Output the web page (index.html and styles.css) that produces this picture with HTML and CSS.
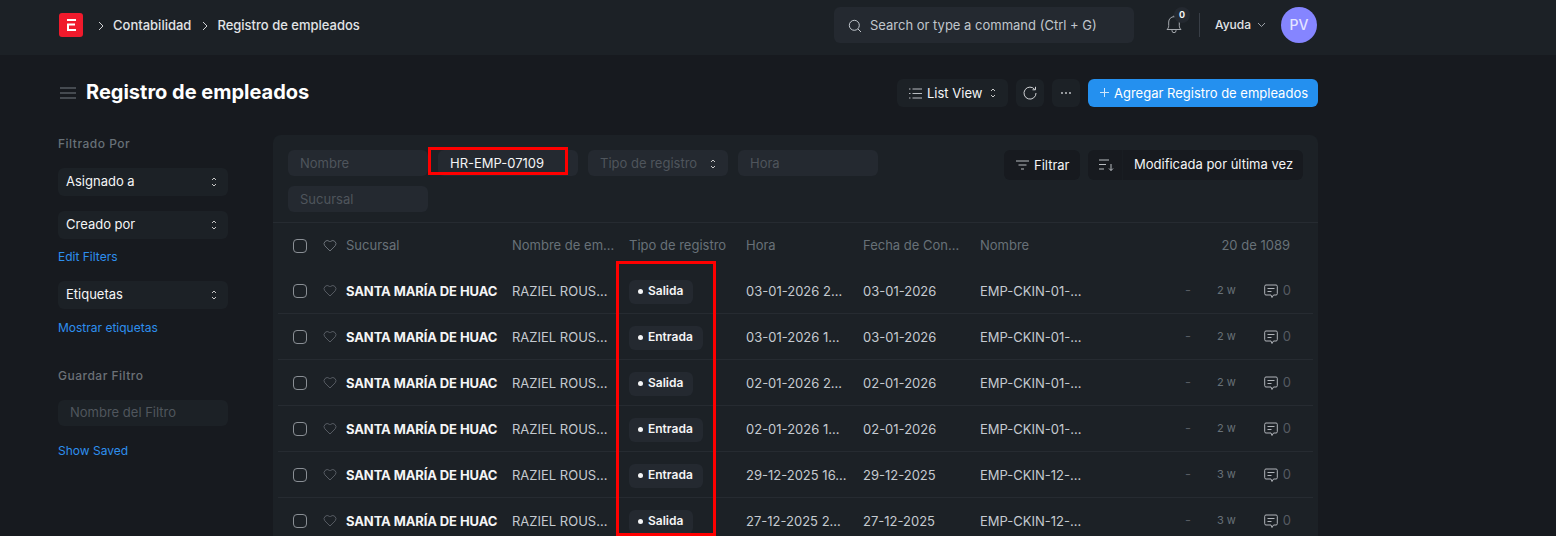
FILE: index.html
```html
<!DOCTYPE html>
<html lang="es">
<head>
<meta charset="UTF-8" />
<title>Registro de empleados</title>
<link rel="stylesheet" href="styles.css">
</head>
<body>
  <header class="navbar">
    <div class="navbar-inner">
      <svg class="logo" width="24" height="24" viewBox="0 0 24 24">
        <rect width="24" height="24" rx="3" fill="#f01a2c"/>
        <path d="M8 6h9v2H8zM8 10.500h8v2h-6v3.500h7v2H8z" fill="#fff"/>
      </svg>
      <nav class="crumbs">
        <svg class="crumb-sep" width="8" height="10" viewBox="0 0 8 10"><path d="M2 1l4 4-4 4" /></svg>
        <a>Contabilidad</a>
        <svg class="crumb-sep" width="8" height="10" viewBox="0 0 8 10"><path d="M2 1l4 4-4 4" /></svg>
        <a>Registro de empleados</a>
      </nav>
      <div class="search">
        <svg width="14" height="14" viewBox="0 0 14 14"><circle cx="6.300" cy="6.300" r="5" /><path d="M10 10l3 3" /></svg>
        <span>Search or type a command (Ctrl + G)</span>
      </div>
      <div class="bell">
        <svg width="18" height="20" viewBox="0 0 18 20"><path d="M2 15.500c1-1 1.700-2 1.700-4V8a5.300 5.300 0 0 1 10.600 0v3.500c0 2 .7 3 1.700 4zM7 15.500v1.200a2 2 0 0 0 4 0v-1.200M9 2.700V1.500" /></svg>
        <span class="bell-count">0</span>
      </div>
      <div class="nav-divider"></div>
      <div class="help">Ayuda
        <svg width="9" height="6" viewBox="0 0 9 6"><path d="M1 1l3.500 3.500L8 1" /></svg>
      </div>
      <div class="avatar">PV</div>
    </div>
  </header>

  <main class="container">
    <div class="page-head">
      <svg class="menu-icon" width="16" height="12" viewBox="0 0 16 12"><path d="M0 1h16M0 6h16M0 11h16" /></svg>
      <h1>Registro de empleados</h1>
      <div class="actions">
        <button class="btn view-btn">
          <svg width="13" height="11" viewBox="0 0 13 11"><path d="M0 1h1.500M0 5.500h1.500M0 10h1.500M3.500 1H13M3.500 5.500H13M3.500 10H13" /></svg>
          List View
          <svg class="updown" width="6" height="10" viewBox="0 0 6 10"><path d="M1 3l2-2 2 2M1 7l2 2 2-2" /></svg>
        </button>
        <button class="btn icon-btn">
          <svg width="14" height="14" viewBox="0 0 14 14"><path d="M11.800 3.500A6 6 0 1 0 13 7M12.500 .8v3h-3" /></svg>
        </button>
        <button class="btn icon-btn">
          <svg class="dots" width="10" height="2" viewBox="0 0 10 2"><circle cx="1" cy="1" r=".9"/><circle cx="5" cy="1" r=".9"/><circle cx="9" cy="1" r=".9"/></svg>
        </button>
        <button class="btn primary">
          <svg class="plus" width="9" height="9" viewBox="0 0 9 9"><path d="M4.500 0v9M0 4.500h9" /></svg>
          Agregar Registro de empleados
        </button>
      </div>
    </div>

    <div class="layout">
      <aside class="sidebar">
        <h4>Filtrado Por</h4>
        <div class="side-select">Asignado a
          <svg class="updown" width="6" height="10" viewBox="0 0 6 10"><path d="M1 3l2-2 2 2M1 7l2 2 2-2" /></svg>
        </div>
        <div class="side-select">Creado por
          <svg class="updown" width="6" height="10" viewBox="0 0 6 10"><path d="M1 3l2-2 2 2M1 7l2 2 2-2" /></svg>
        </div>
        <a class="side-link">Edit Filters</a>
        <div class="side-select tags">Etiquetas
          <svg class="updown" width="6" height="10" viewBox="0 0 6 10"><path d="M1 3l2-2 2 2M1 7l2 2 2-2" /></svg>
        </div>
        <a class="side-link">Mostrar etiquetas</a>
        <h4 class="save-title">Guardar Filtro</h4>
        <div class="side-input">Nombre del Filtro</div>
        <a class="side-link">Show Saved</a>
      </aside>

      <section class="list-card">
        <div class="filters">
          <div class="filter-fields">
            <div class="field">Nombre</div>
            <div class="field filled">HR-EMP-07109</div>
            <div class="field select">Tipo de registro
              <svg class="updown" width="6" height="10" viewBox="0 0 6 10"><path d="M1 3l2-2 2 2M1 7l2 2 2-2" /></svg>
            </div>
            <div class="field">Hora</div>
            <div class="field">Sucursal</div>
          </div>
          <div class="filter-btns">
            <button class="btn filter-btn">
              <svg width="13" height="10" viewBox="0 0 13 10"><path d="M0 1h13M2.500 5h8M5 9h3" /></svg>
              Filtrar
            </button>
            <div class="sort-group">
              <span class="sort-icon">
                <svg width="15" height="12" viewBox="0 0 15 12"><path d="M0 1h10M0 5.500h7M0 10h5M12 5v6.500M10 9.500l2 2 2-2" /></svg>
              </span>
              <span class="sort-label">Modificada por última vez</span>
            </div>
          </div>
        </div>

        <div class="row head">
          <span class="check"></span>
          <svg class="heart" width="14" height="13" viewBox="0 0 14 13"><path d="M7 12L1.800 6.800a3.200 3.200 0 0 1 4.500-4.500l.7.7.7-.7a3.200 3.200 0 0 1 4.500 4.500z" /></svg>
          <span>Sucursal</span>
          <span>Nombre de em…</span>
          <span>Tipo de registro</span>
          <span>Hora</span>
          <span>Fecha de Con…</span>
          <span>Nombre</span>
          <span class="count">20 de 1089</span>
        </div>

        <div class="row">
          <span class="check"></span>
          <svg class="heart" width="14" height="13" viewBox="0 0 14 13"><path d="M7 12L1.800 6.800a3.200 3.200 0 0 1 4.500-4.500l.7.7.7-.7a3.200 3.200 0 0 1 4.500 4.500z" /></svg>
          <span class="subject">SANTA MARÍA DE HUAC</span>
          <span>RAZIEL ROUS…</span>
          <span><span class="pill">Salida</span></span>
          <span>03-01-2026 2…</span>
          <span>03-01-2026</span>
          <span>EMP-CKIN-01-…</span>
          <span class="meta"><span class="dash">-</span><span class="age">2 w</span><svg class="chat" width="14" height="15" viewBox="0 0 14 15"><path d="M2 1h10a1.300 1.300 0 0 1 1.300 1.300v7.400A1.300 1.300 0 0 1 12 11H9.500L8 13.500 7 11H2A1.300 1.300 0 0 1 .7 9.700V2.300A1.300 1.300 0 0 1 2 1zM3.500 4.500h7M3.500 7.500h4" /></svg><span class="zero">0</span></span>
        </div>
        <div class="row">
          <span class="check"></span>
          <svg class="heart" width="14" height="13" viewBox="0 0 14 13"><path d="M7 12L1.800 6.800a3.200 3.200 0 0 1 4.500-4.500l.7.7.7-.7a3.200 3.200 0 0 1 4.500 4.500z" /></svg>
          <span class="subject">SANTA MARÍA DE HUAC</span>
          <span>RAZIEL ROUS…</span>
          <span><span class="pill">Entrada</span></span>
          <span>03-01-2026 1…</span>
          <span>03-01-2026</span>
          <span>EMP-CKIN-01-…</span>
          <span class="meta"><span class="dash">-</span><span class="age">2 w</span><svg class="chat" width="14" height="15" viewBox="0 0 14 15"><path d="M2 1h10a1.300 1.300 0 0 1 1.300 1.300v7.400A1.300 1.300 0 0 1 12 11H9.500L8 13.500 7 11H2A1.300 1.300 0 0 1 .7 9.700V2.300A1.300 1.300 0 0 1 2 1zM3.500 4.500h7M3.500 7.500h4" /></svg><span class="zero">0</span></span>
        </div>
        <div class="row">
          <span class="check"></span>
          <svg class="heart" width="14" height="13" viewBox="0 0 14 13"><path d="M7 12L1.800 6.800a3.200 3.200 0 0 1 4.500-4.500l.7.7.7-.7a3.200 3.200 0 0 1 4.500 4.500z" /></svg>
          <span class="subject">SANTA MARÍA DE HUAC</span>
          <span>RAZIEL ROUS…</span>
          <span><span class="pill">Salida</span></span>
          <span>02-01-2026 2…</span>
          <span>02-01-2026</span>
          <span>EMP-CKIN-01-…</span>
          <span class="meta"><span class="dash">-</span><span class="age">2 w</span><svg class="chat" width="14" height="15" viewBox="0 0 14 15"><path d="M2 1h10a1.300 1.300 0 0 1 1.300 1.300v7.400A1.300 1.300 0 0 1 12 11H9.500L8 13.500 7 11H2A1.300 1.300 0 0 1 .7 9.700V2.300A1.300 1.300 0 0 1 2 1zM3.500 4.500h7M3.500 7.500h4" /></svg><span class="zero">0</span></span>
        </div>
        <div class="row">
          <span class="check"></span>
          <svg class="heart" width="14" height="13" viewBox="0 0 14 13"><path d="M7 12L1.800 6.800a3.200 3.200 0 0 1 4.500-4.500l.7.7.7-.7a3.200 3.200 0 0 1 4.500 4.500z" /></svg>
          <span class="subject">SANTA MARÍA DE HUAC</span>
          <span>RAZIEL ROUS…</span>
          <span><span class="pill">Entrada</span></span>
          <span>02-01-2026 1…</span>
          <span>02-01-2026</span>
          <span>EMP-CKIN-01-…</span>
          <span class="meta"><span class="dash">-</span><span class="age">2 w</span><svg class="chat" width="14" height="15" viewBox="0 0 14 15"><path d="M2 1h10a1.300 1.300 0 0 1 1.300 1.300v7.400A1.300 1.300 0 0 1 12 11H9.500L8 13.500 7 11H2A1.300 1.300 0 0 1 .7 9.700V2.300A1.300 1.300 0 0 1 2 1zM3.500 4.500h7M3.500 7.500h4" /></svg><span class="zero">0</span></span>
        </div>
        <div class="row">
          <span class="check"></span>
          <svg class="heart" width="14" height="13" viewBox="0 0 14 13"><path d="M7 12L1.800 6.800a3.200 3.200 0 0 1 4.500-4.500l.7.7.7-.7a3.200 3.200 0 0 1 4.500 4.500z" /></svg>
          <span class="subject">SANTA MARÍA DE HUAC</span>
          <span>RAZIEL ROUS…</span>
          <span><span class="pill">Entrada</span></span>
          <span>29-12-2025 16…</span>
          <span>29-12-2025</span>
          <span>EMP-CKIN-12-…</span>
          <span class="meta"><span class="dash">-</span><span class="age">3 w</span><svg class="chat" width="14" height="15" viewBox="0 0 14 15"><path d="M2 1h10a1.300 1.300 0 0 1 1.300 1.300v7.400A1.300 1.300 0 0 1 12 11H9.500L8 13.500 7 11H2A1.300 1.300 0 0 1 .7 9.700V2.300A1.300 1.300 0 0 1 2 1zM3.500 4.500h7M3.500 7.500h4" /></svg><span class="zero">0</span></span>
        </div>
        <div class="row">
          <span class="check"></span>
          <svg class="heart" width="14" height="13" viewBox="0 0 14 13"><path d="M7 12L1.800 6.800a3.200 3.200 0 0 1 4.500-4.500l.7.7.7-.7a3.200 3.200 0 0 1 4.500 4.500z" /></svg>
          <span class="subject">SANTA MARÍA DE HUAC</span>
          <span>RAZIEL ROUS…</span>
          <span><span class="pill">Salida</span></span>
          <span>27-12-2025 2…</span>
          <span>27-12-2025</span>
          <span>EMP-CKIN-12-…</span>
          <span class="meta"><span class="dash">-</span><span class="age">3 w</span><svg class="chat" width="14" height="15" viewBox="0 0 14 15"><path d="M2 1h10a1.300 1.300 0 0 1 1.300 1.300v7.400A1.300 1.300 0 0 1 12 11H9.500L8 13.500 7 11H2A1.300 1.300 0 0 1 .7 9.700V2.300A1.300 1.300 0 0 1 2 1zM3.500 4.500h7M3.500 7.500h4" /></svg><span class="zero">0</span></span>
        </div>
      </section>
    </div>
  </main>

  <!-- recuadros rojos de la captura -->
  <div class="mark mark-field"></div>
  <div class="mark mark-column"></div>
</body>
</html>
```

FILE: styles.css
```css
* {
  box-sizing: border-box;
}
html, body {
  height: 536px;
  overflow: hidden;
}
body {
  margin: 0;
  position: relative;
  background-color: #171a1f;
  color: #f4f5f6;
  font-family: Inter, sans-serif;
  font-size: 13px;
  line-height: 1.2;
}
svg {
  fill: none;
  stroke: currentColor;
  stroke-width: 1;
  flex-shrink: 0;
}
.updown {
  color: #c7c7c7;
}

/* barra superior */
.navbar {
  height: 55px;
  background-color: #1c2126;
  padding: 0 0 5px 58px;
  display: flex;
}
.navbar-inner {
  width: 1260px;
  display: flex;
  align-items: center;
}
.logo {
  stroke: none;
  margin-left: 1px;
}
.crumbs {
  display: flex;
  align-items: center;
  font-weight: 500;
  color: #e2e4e6;
  margin-left: 14px;
  padding-top: 1px;
}
.crumb-sep {
  color: #d0d2d5;
  margin-right: 8px;
}
.crumbs a {
  margin-right: 8px;
}
.crumbs a:first-of-type {
  margin-right: 10px;
}
.search {
  width: 300px;
  height: 36px;
  margin-left: auto;
  background-color: #242930;
  border-radius: 6px;
  display: flex;
  align-items: center;
  gap: 8px;
  padding: 2px 0 0 14px;
  color: #c0c6cc;
}
.bell {
  position: relative;
  margin-left: 31px;
  height: 22px;
  color: #a5a9ae;
}
.bell-count {
  position: absolute;
  top: -7px;
  left: 9px;
  width: 16px;
  height: 16px;
  font-size: 9px;
  font-weight: 700;
  color: #f4f5f6;
  text-align: center;
  background-color: #242930;
  border-radius: 50%;
  line-height: 16px;
}
.nav-divider {
  width: 1px;
  height: 24px;
  background-color: #383e46;
  margin-left: 16px;
}
.help {
  display: flex;
  align-items: center;
  gap: 6px;
  margin-left: 15px;
  font-size: 12px;
  font-weight: 500;
  color: #e2e4e6;
}
.help svg {
  color: #9aa0a6;
}
.avatar {
  width: 36px;
  height: 36px;
  border-radius: 50%;
  background-color: #8585ff;
  color: #e4e4ff;
  display: flex;
  align-items: center;
  justify-content: center;
  font-size: 14px;
  font-weight: 500;
  margin-left: 15px;
  margin-right: 1px;
}

/* contenido */
.container {
  width: 1260px;
  margin-left: 58px;
}
.page-head {
  height: 80px;
  display: flex;
  align-items: center;
  padding-bottom: 4px;
}
.menu-icon {
  color: #565b62;
  stroke-width: 1.500;
  margin-left: 2px;
  margin-right: 10px;
}
h1 {
  margin: -2px 0 0;
  font-size: 20px;
  font-weight: 700;
  color: #fff;
}
.actions {
  margin-left: auto;
  display: flex;
  gap: 8px;
}
.btn {
  height: 28px;
  border: 0;
  border-radius: 6px;
  background-color: #1c2126;
  color: #f4f5f6;
  font-family: inherit;
  font-size: 13px;
  display: flex;
  align-items: center;
  padding: 0;
}
.view-btn {
  width: 111px;
  padding-left: 12px;
  gap: 5px;
}
.view-btn svg:first-child {
  color: #b8bcc1;
}
.view-btn .updown {
  margin-left: 3px;
}
.icon-btn {
  width: 28px;
  justify-content: center;
  color: #d0d2d5;
}
.dots {
  stroke: none;
  fill: currentColor;
}
.primary {
  width: 230px;
  background-color: #2490ef;
  color: #fff;
  padding: 0 0 1px 12px;
  gap: 5px;
}
.plus {
  color: #cfe6fb;
}
.layout {
  display: flex;
  align-items: flex-start;
}

/* columna de filtros */
.sidebar {
  width: 170px;
  margin-right: 45px;
  font-size: 13px;
}
.sidebar h4 {
  margin: 0;
  padding-top: 2px;
  font-size: 12px;
  font-weight: 500;
  letter-spacing: .5px;
  color: #687178;
  height: 33px;
}
.side-select {
  height: 28px;
  border-radius: 6px;
  background-color: #1c2126;
  padding: 0 11px 0 8px;
  margin-bottom: 15px;
  display: flex;
  align-items: center;
  justify-content: space-between;
}
.side-link {
  display: block;
  font-size: 12px;
  color: #2e8fee;
  height: 15px;
  line-height: 15px;
}
.side-select + .side-link {
  margin-top: -4px;
}
.sidebar .side-select:not(.tags) + .side-link {
  margin-top: -5px;
  margin-bottom: 17px;
}
.sidebar .save-title {
  margin-top: 34px;
  padding-top: 0;
  height: 31px;
  color: #6c7177;
}
.side-input {
  height: 26px;
  border-radius: 6px;
  background-color: #1c2126;
  color: #50565d;
  padding-left: 12px;
  display: flex;
  align-items: center;
  margin-bottom: 17px;
}

/* tarjeta de la lista */
.list-card {
  width: 1045px;
  height: 500px;
  background-color: #1c2126;
  border-radius: 8px 8px 0 0;
  padding: 0 5px;
}
.filters {
  height: 88px;
  margin: 0 -5px;
  padding: 15px 15px 0;
  border-bottom: 1px solid #262b31;
  display: flex;
  justify-content: space-between;
}
.filter-fields {
  width: 600px;
  display: flex;
  flex-wrap: wrap;
  gap: 10px;
  align-content: flex-start;
}
.field {
  width: 140px;
  height: 26px;
  border-radius: 6px;
  background-color: #242930;
  color: #4f555c;
  padding: 1px 12px 0;
  display: flex;
  align-items: center;
  justify-content: space-between;
}
.field.filled {
  color: #f4f5f6;
}
.filter-btns {
  display: flex;
  gap: 8px;
  height: 30px;
}
.filter-btn {
  width: 76px;
  height: 30px;
  padding-left: 12px;
  gap: 5px;
  background-color: #171a1f;
}
.filter-btn svg {
  color: #b8bcc1;
}
.sort-group {
  width: 215px;
  height: 30px;
  display: flex;
  align-items: center;
  background-color: #171a1f;
  border-radius: 6px;
}
.sort-icon {
  width: 35px;
  height: 30px;
  display: flex;
  align-items: center;
  padding-left: 11px;
  color: #b8bcc1;
  border-right: 1px solid #191d22;
}
.sort-label {
  margin-left: 11px;
}

/* filas */
.row {
  height: 46px;
  padding: 2px 23px 0 15px;
  display: grid;
  grid-template-columns: 30px 23px 166px 117px 117px 117px 117px 117px 1fr;
  align-items: center;
  color: #c5cad0;
  font-size: 13px;
  border-bottom: 1px solid #262b31;
  white-space: nowrap;
}
.row.head {
  color: #687178;
  height: 45px;
  padding-top: 0;
  border-bottom: 0;
}
.row.head .heart {
  color: #6a7077;
  margin-top: 0;
}
.row.head .check {
  margin-top: 0;
}
.check {
  width: 14px;
  height: 14px;
  border: 1px solid #8a8f95;
  border-radius: 4px;
  display: block;
  margin-top: -2px;
}
.heart {
  color: #565b62;
  margin-top: -2px;
}
.subject {
  font-weight: 700;
  color: #f4f5f6;
  letter-spacing: -.1px;
}
.pill {
  display: inline-flex;
  align-items: center;
  height: 24px;
  padding: 0 10px 0 9px;
  background-color: #242930;
  border-radius: 6px;
  font-size: 12px;
  font-weight: 600;
  color: #f4f5f6;
}
.pill::before {
  content: "";
  width: 5px;
  height: 5px;
  border-radius: 50%;
  background-color: #f4f5f6;
  margin-right: 5px;
}
.count {
  text-align: right;
  color: #687178;
}
.meta {
  display: flex;
  align-items: center;
  justify-content: flex-end;
  color: #687178;
  margin: -1px -1px 0 0;
}
.dash {
  margin-right: 26px;
  color: #565b62;
}
.age {
  font-size: 11px;
  margin-right: 28px;
}
.chat {
  color: #b0b4b9;
  margin-right: 5px;
}
.zero {
  color: #565b62;
}

/* recuadros sobre la captura */
.mark {
  position: absolute;
  border: 3px solid #ff0000;
  pointer-events: none;
}
.mark-field {
  left: 428px;
  top: 147px;
  width: 140px;
  height: 28px;
}
.mark-column {
  left: 616px;
  top: 261px;
  width: 100px;
  height: 275px;
}
```
